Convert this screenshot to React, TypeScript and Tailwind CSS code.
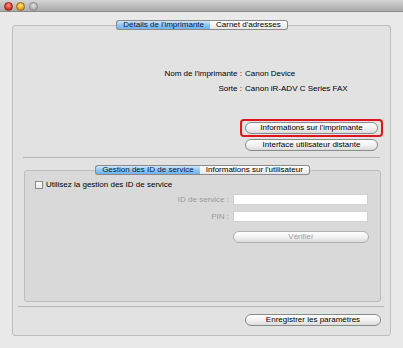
import React from "react";

function Btn({ children, w, disabled }: { children: React.ReactNode; w: string; disabled?: boolean }) {
  return (
    <div
      className={`${w} h-[12px] rounded-full border border-[#8a8a8a] bg-gradient-to-b from-[#ffffff] via-[#f2f2f2] to-[#dcdcdc] flex items-center justify-center text-[8px] leading-none ${
        disabled ? "text-[#a0a0a0] border-[#b0b0b0]" : "text-[#000]"
      }`}
    >
      {children}
    </div>
  );
}

function Tab({ children, selected, first }: { children: React.ReactNode; selected?: boolean; first?: boolean }) {
  return (
    <div
      className={`h-[10px] px-[6px] flex items-center text-[8px] leading-none border-y border-[#8a8a8a] ${
        first ? "rounded-l-[3px] border-l" : "rounded-r-[3px] border-r"
      } ${
        selected
          ? "bg-gradient-to-b from-[#cfe6fb] via-[#90c6f3] to-[#6fb3ee] text-[#0a1a33]"
          : "bg-gradient-to-b from-[#ffffff] to-[#e6e6e6] text-[#000]"
      }`}
    >
      {children}
    </div>
  );
}

export default function App() {
  return (
    <div
      className="w-[403px] h-[348px] bg-[#e9e9e9] overflow-hidden flex flex-col"
      style={{ fontFamily: '"Liberation Sans", Arial, sans-serif' }}
    >
      {/* title bar */}
      <div className="h-[12px] bg-gradient-to-b from-[#d4d4d4] to-[#ababab] border-b border-[#8c8c8c] flex items-start gap-[3.5px] pl-[3.5px] pt-[1.5px] shrink-0">
        <div className="w-[9px] h-[9px] rounded-full bg-[radial-gradient(circle_at_50%_35%,#ff9a8a,#e2312a_60%,#a51510)] border border-[#8a2a20]" />
        <div className="w-[9px] h-[9px] rounded-full bg-[radial-gradient(circle_at_50%_35%,#ffe38a,#f2a918_60%,#b57808)] border border-[#9a6a10]" />
        <div className="w-[9px] h-[9px] rounded-full bg-[radial-gradient(circle_at_50%_35%,#e0e0e0,#b5b5b5_60%,#8e8e8e)] border border-[#8a8a8a]" />
      </div>

      {/* outer group box */}
      <div className="ml-[12px] mt-[13px] w-[379px] h-[311px] border border-[#bdbdbd] rounded-[3px] bg-[#e2e2e2] flex flex-col">
        <div className="-mt-[6px] flex justify-center pl-[1px]">
          <Tab selected first>Détails de l'imprimante</Tab>
          <Tab>Carnet d'adresses</Tab>
        </div>

        {/* printer info */}
        <div className="mt-[38px] flex flex-col gap-[4px] text-[8px] leading-[11px] text-[#000]">
          <div className="flex">
            <div className="w-[229px] text-right">Nom de l'imprimante :</div>
            <div className="pl-[3px]">Canon Device</div>
          </div>
          <div className="flex">
            <div className="w-[229px] text-right">Sorte :</div>
            <div className="pl-[3px]">Canon iR-ADV C Series FAX</div>
          </div>
        </div>

        <div className="mt-[25px] flex flex-col items-end pr-[7px]">
          <div className="border-2 border-[#e0141c] rounded-[4px] px-[3px] py-[1px]">
            <Btn w="w-[133px]">Informations sur l'imprimante</Btn>
          </div>
          <div className="mt-[2px] mr-[5px]">
            <Btn w="w-[133px]">Interface utilisateur distante</Btn>
          </div>
        </div>

        <div className="mt-[6px] mx-[10px] h-[2px] border-t border-[#b8b8b8] border-b-white" />

        {/* inner group box */}
        <div className="mt-[11px] ml-[11px] w-[357px] h-[132px] border border-[#bdbdbd] rounded-[3px] bg-[#d9d9d9] flex flex-col">
          <div className="-mt-[6px] flex justify-center">
            <Tab selected first>Gestion des ID de service</Tab>
            <Tab>Informations sur l'utilisateur</Tab>
          </div>

          <div className="mt-[6px] ml-[10px] flex items-center gap-[3px] text-[8px] leading-none text-[#000]">
            <div className="w-[8px] h-[8px] border border-[#8a8a8a] bg-gradient-to-b from-white to-[#e8e8e8]" />
            <span>Utilisez la gestion des ID de service</span>
          </div>

          <div className="mt-[5px] flex flex-col gap-[6px] text-[8px] leading-none text-[#9a9a9a]">
            <div className="flex items-center">
              <div className="w-[208px] text-right pr-[4px]">ID de service :</div>
              <div className="w-[135px] h-[11px] bg-white border border-[#d0d0d0]" />
            </div>
            <div className="flex items-center">
              <div className="w-[208px] text-right pr-[4px]">PIN :</div>
              <div className="w-[135px] h-[11px] bg-white border border-[#d0d0d0]" />
            </div>
          </div>

          <div className="mt-[9px] ml-[208px]">
            <Btn w="w-[136px]" disabled>Vérifier</Btn>
          </div>
        </div>

        <div className="mt-[4px] ml-[5px] mr-[6px] h-[2px] border-t border-[#b8b8b8] border-b-white" />

        <div className="mt-[6px] flex justify-end pr-[9px]">
          <Btn w="w-[136px]">Enregistrer les paramètres</Btn>
        </div>
      </div>
    </div>
  );
}
